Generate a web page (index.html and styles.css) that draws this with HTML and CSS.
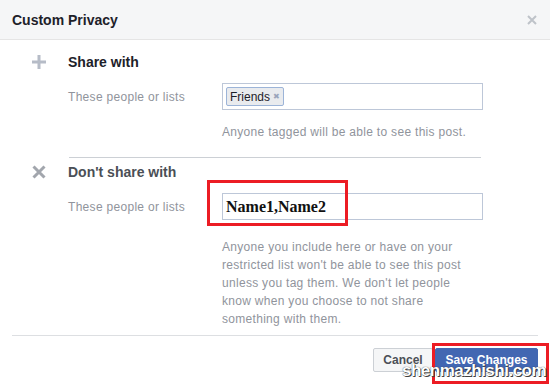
FILE: index.html
```html
<!DOCTYPE html>
<html lang="en">
  <head>
    <meta charset="UTF-8" />
    <title>Custom Privacy</title>
    <link rel="stylesheet" href="styles.css">
  </head>
  <body>
    <div class="dialog">
      <div class="dialog-head">
        <span class="title">Custom Privacy</span>
        <svg class="close" width="10" height="10" viewBox="0 0 10 10">
          <path d="M1 1L9 9M9 1L1 9" stroke="#bec3c9" stroke-width="2" />
        </svg>
      </div>

      <div class="dialog-body">
        <div class="group-head">
          <span class="icon">
            <svg width="14" height="14" viewBox="0 0 14 14">
              <rect x="5.5" y="0" width="3" height="14" fill="#b6bcc7" />
              <rect x="0" y="5.5" width="14" height="3" fill="#b6bcc7" />
            </svg>
          </span>
          <span class="group-title">Share with</span>
        </div>
        <div class="field-row">
          <label class="field-label">These people or lists</label>
          <div class="field">
            <span class="token">Friends<span class="token-x">&#x2716;</span></span>
          </div>
        </div>
        <div class="hint">Anyone tagged will be able to see this post.</div>

        <div class="divider"></div>

        <div class="group-head second">
          <span class="icon">
            <svg width="14" height="14" viewBox="0 0 14 14">
              <path d="M1.5 1.5L12.5 12.5M12.5 1.5L1.5 12.5" stroke="#a2a6ad" stroke-width="3" />
            </svg>
          </span>
          <span class="group-title dark">Don't share with</span>
        </div>
        <div class="field-row">
          <label class="field-label">These people or lists</label>
          <div class="field">
            <span class="names">Name1,Name2</span>
          </div>
        </div>
        <p class="hint para">
          Anyone you include here or have on your restricted list won't be able to see this post
          unless you tag them. We don't let people know when you choose to not share
          something with them.
        </p>
      </div>

      <div class="dialog-foot">
        <button class="btn btn-cancel">Cancel</button>
        <button class="btn btn-save">Save Changes</button>
      </div>

      <!-- red marks drawn over the screenshot -->
      <div class="mark mark-name"></div>
      <div class="mark mark-save"></div>
      <div class="watermark">shenmazhishi.com</div>
    </div>
  </body>
</html>
```

FILE: styles.css
```css
body {
  margin: 0;
  background: #fff;
  font-family: "Liberation Sans", Arial, sans-serif;
}
.dialog {
  position: relative;
  width: 550px;
  height: 384px;
  overflow: hidden;
}
.dialog-head {
  height: 39px;
  display: flex;
  align-items: center;
  justify-content: space-between;
  padding: 0 13px 0 12px;
  background: #f5f6f7;
  border-bottom: 1px solid #e5e5e5;
}
.title {
  font-size: 14px;
  font-weight: bold;
  color: #1d2129;
}
.dialog-body {
  padding: 13px 0 0 32px;
}
.group-head {
  display: flex;
  align-items: center;
  height: 18px;
}
.group-head.second {
  margin-top: 5px;
}
.icon {
  width: 36px;
  height: 14px;
  display: flex;
}
.group-title {
  font-size: 14px;
  font-weight: bold;
  line-height: 18px;
  color: #1d2129;
}
.group-title.dark {
  color: #4b4f56;
}
.field-row {
  display: flex;
  align-items: center;
  margin-top: 12px;
  padding-left: 36px;
}
.field-label {
  width: 154px;
  font-size: 12px;
  letter-spacing: 0.3px;
  color: #90949c;
}
.field {
  width: 261px;
  height: 27px;
  box-sizing: border-box;
  border: 1px solid #bdc7d8;
  padding: 3px 3px;
  display: flex;
  align-items: center;
}
.token {
  display: inline-flex;
  align-items: center;
  height: 19px;
  box-sizing: border-box;
  padding: 0 3px;
  background: #e9ebee;
  border: 1px solid #9cb4d8;
  border-radius: 2px;
  font-size: 12px;
  color: #1d2129;
}
.token-x {
  margin-left: 3px;
  font-size: 8px;
  color: #9aa5bb;
}
.names {
  font-family: "Liberation Serif", "Times New Roman", serif;
  font-size: 16px;
  font-weight: bold;
  color: #111;
}
.hint {
  margin: 14px 0 0 190px;
  font-size: 12px;
  line-height: 16px;
  letter-spacing: 0.3px;
  color: #90949c;
}
.para {
  width: 252px;
  margin-top: 18px;
  margin-bottom: 0;
  line-height: 18px;
}
.divider {
  width: 412px;
  height: 1px;
  margin: 17px 0 0 37px;
  background: #ccd0d5;
}
.dialog-foot {
  display: flex;
  justify-content: flex-end;
  margin: 7px 12px 0;
  padding-top: 12px;
  border-top: 1px solid #dddfe2;
}
.btn {
  height: 24px;
  padding: 0;
  border: 1px solid;
  border-radius: 2px;
  font-family: inherit;
  font-size: 12px;
  font-weight: bold;
}
.btn-cancel {
  width: 60px;
  background: #f5f6f7;
  border-color: #ccd0d5;
  color: #4b4f56;
}
.btn-save {
  width: 103px;
  margin-left: 2px;
  background: #4267b2;
  border-color: #4267b2;
  color: #fff;
}
.mark {
  position: absolute;
  box-sizing: border-box;
  border: 3px solid #ec1c24;
}
.mark-name {
  left: 207px;
  top: 180px;
  width: 141px;
  height: 46px;
}
.mark-save {
  left: 432px;
  top: 343px;
  width: 117px;
  height: 41px;
}
.watermark {
  position: absolute;
  left: 402px;
  top: 361px;
  font-size: 17px;
  font-weight: bold;
  letter-spacing: -0.5px;
  color: #fff;
  text-shadow: 0 0 1px #222, 1px 1px 0 #444;
}
```
